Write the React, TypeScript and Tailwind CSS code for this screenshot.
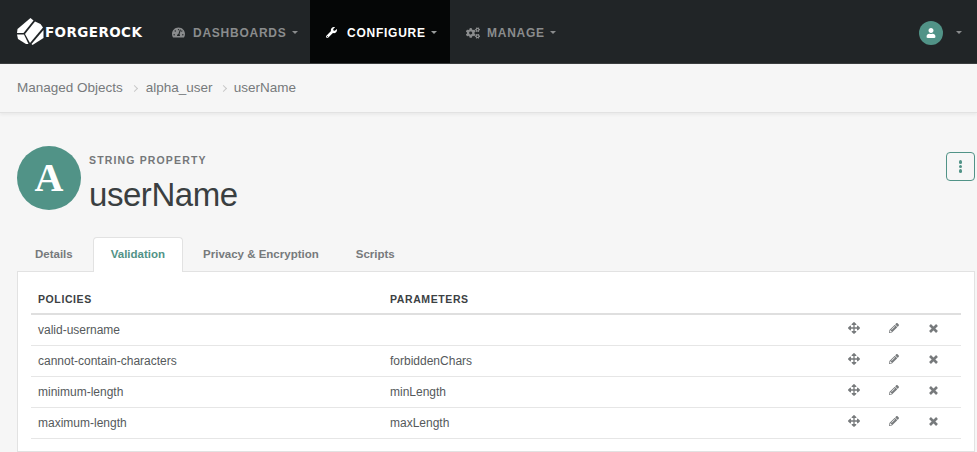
import { FaTachometerAlt, FaWrench, FaCogs, FaUser, FaArrowsAlt, FaPencilAlt } from 'react-icons/fa';
import type { ReactNode } from 'react';

const policies = [
  { name: 'valid-username', param: '' },
  { name: 'cannot-contain-characters', param: 'forbiddenChars' },
  { name: 'minimum-length', param: 'minLength' },
  { name: 'maximum-length', param: 'maxLength' },
];

function Caret({ className = 'border-t-[#8a8c8d]' }: { className?: string }) {
  return <span className={`h-0 w-0 border-x-[3px] border-t-[3px] border-x-transparent ${className}`} />;
}

function NavItem({ icon, label, active, className }: { icon: ReactNode; label: string; active?: boolean; className: string }) {
  return (
    <div
      className={`flex h-full items-center pt-[2px] text-[12px] font-bold tracking-[0.75px] ${
        active ? 'bg-[#050606] text-white' : 'text-[#8a8c8d]'
      } ${className}`}
    >
      <span className="flex w-[21px] items-center">{icon}</span>
      <span>{label}</span>
      <Caret className={`ml-[5px] ${active ? 'border-t-[#9a9c9c]' : 'border-t-[#8a8c8d]'}`} />
    </div>
  );
}

function Logo() {
  return (
    <svg width="27" height="28" viewBox="0 0 27 28" className="shrink-0">
      <path d="M13.5 0 L16.5 2.5 L6.5 15 L0 15 L0.5 11 Z" fill="#fff" />
      <path d="M18 3.5 L23.5 6 L26 9.5 L13 25 L8 16 Z" fill="#fff" />
      <path d="M0 16.5 L7 16.5 L11.5 26 L9 26 L1 21 Z" fill="#fff" />
      <path d="M26.5 12 L26.5 20 L15.5 27 L14.5 26 Z" fill="#fff" />
    </svg>
  );
}

function CloseIcon() {
  return (
    <svg width="9" height="9" viewBox="0 0 9 9" className="ml-[30px]">
      <path d="M1 1 L8 8 M8 1 L1 8" stroke="currentColor" strokeWidth="2.6" />
    </svg>
  );
}

export default function App() {
  return (
    <div className="flex h-[452px] w-[977px] flex-col overflow-hidden bg-[#f6f6f6] font-['Liberation_Sans',sans-serif]">
      <nav className="flex h-[64px] shrink-0 items-center border-b border-[#3a3d3e] bg-[#212527] pl-[17px]">
        <Logo />
        <span className="ml-[1px] w-[127px] pt-[1px] font-['DejaVu_Sans',sans-serif] text-[13.5px] font-bold tracking-[0.4px] text-white">
          FORGEROCK
        </span>
        <NavItem icon={<FaTachometerAlt size={13} />} label="DASHBOARDS" className="w-[138px]" />
        <NavItem icon={<FaWrench size={11} />} label="CONFIGURE" active className="w-[140px] pl-[16px]" />
        <NavItem icon={<FaCogs size={14} />} label="MANAGE" className="ml-[16px]" />
        <div className="ml-auto flex items-center pr-[15px] pt-[2px]">
          <div className="flex h-[24px] w-[24px] items-center justify-center rounded-full bg-[#519387] text-white">
            <FaUser size={10} />
          </div>
          <Caret className="ml-[13px] border-t-[#8a8c8d]" />
        </div>
      </nav>

      <div className="flex h-[49px] shrink-0 items-center border-b border-[#e2e2e2] pl-[17px] text-[13.5px] text-[#777a7c] shadow-[0_2px_3px_rgba(0,0,0,0.05)]">
        <span>Managed Objects</span>
        <span className="mx-[9px] h-[5px] w-[5px] rotate-45 border-t border-r border-[#c9c9c9]" />
        <span>alpha_user</span>
        <span className="mx-[8px] h-[5px] w-[5px] rotate-45 border-t border-r border-[#c9c9c9]" />
        <span>userName</span>
      </div>

      <div className="flex items-start justify-between pl-[17px] pr-[2px] pt-[33px]">
        <div className="flex items-start">
          <div className="flex h-[64px] w-[64px] items-center justify-center rounded-full bg-[#519387] font-['Liberation_Serif',serif] text-[40px] font-bold text-white">
            A
          </div>
          <div className="ml-[8px] pt-[8px]">
            <div className="text-[10.5px] font-bold leading-[13px] tracking-[1.15px] text-[#757779]">STRING PROPERTY</div>
            <div className="mt-[7px] text-[33px] leading-[42px] tracking-[-0.45px] text-[#3a3f41]">userName</div>
          </div>
        </div>
        <button className="mt-[6px] flex h-[29px] w-[29px] flex-col items-center justify-center gap-[1px] rounded-[4px] border border-[#519387]">
          <span className="h-[3.5px] w-[3.5px] rounded-full bg-[#519387]" />
          <span className="h-[3.5px] w-[3.5px] rounded-full bg-[#519387]" />
          <span className="h-[3.5px] w-[3.5px] rounded-full bg-[#519387]" />
        </button>
      </div>

      <div className="relative z-10 mt-[21px] flex h-[35px] pl-[17px] text-[11.5px] font-bold text-[#777a7c]">
        <div className="flex items-center px-[18px]">Details</div>
        <div className="ml-[2px] flex items-center rounded-t-[4px] border border-b-0 border-[#e2e2e2] bg-white px-[17px] text-[#519387]">
          Validation
        </div>
        <div className="ml-[2px] flex items-center px-[18px]">Privacy &amp; Encryption</div>
        <div className="ml-[1px] flex items-center px-[18px]">Scripts</div>
      </div>

      <div className="ml-[17px] mr-[2px] -mt-px flex-1 border border-[#e2e2e2] bg-white px-[13px] pt-[21px]">
        <div className="flex h-[22px] items-start border-b-2 border-[#dfdfdf] pl-[7px] text-[10.5px] font-bold leading-[13px] tracking-[0.6px] text-[#3c4143]">
          <div className="w-[352px]">POLICIES</div>
          <div>PARAMETERS</div>
        </div>
        {policies.map((p) => (
          <div key={p.name} className="flex h-[31px] items-center border-b border-[#e6e6e6] pl-[7px] text-[12px] text-[#55595b]">
            <div className="w-[352px]">{p.name}</div>
            <div>{p.param}</div>
            <div className="ml-auto flex -translate-y-[2px] items-center pr-[23px] text-[#777a7c]">
              <FaArrowsAlt size={12} className="-ml-px" />
              <FaPencilAlt size={10} className="ml-[29px]" />
              <CloseIcon />
            </div>
          </div>
        ))}
      </div>
    </div>
  );
}
